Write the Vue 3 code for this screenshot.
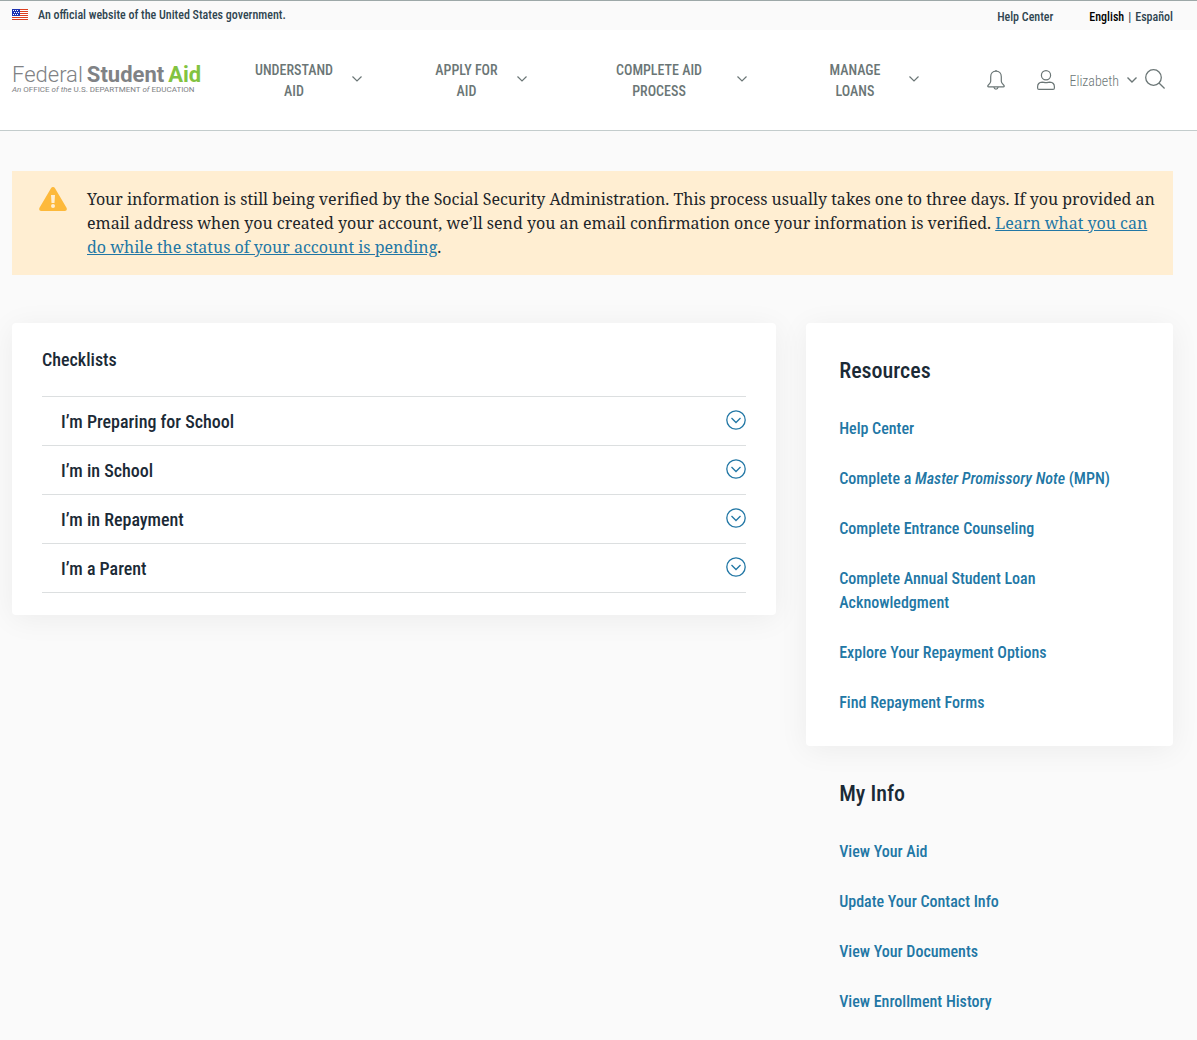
<script setup>
import { ref } from 'vue'

const navItems = [
  { id: 'understand', lines: ['UNDERSTAND', 'AID'] },
  { id: 'apply', lines: ['APPLY FOR', 'AID'] },
  { id: 'complete', lines: ['COMPLETE AID', 'PROCESS'] },
  { id: 'manage', lines: ['MANAGE', 'LOANS'] },
]

const checklists = ['I’m Preparing for School', 'I’m in School', 'I’m in Repayment', 'I’m a Parent']
const open = ref(null)

const infoLinks = ['View Your Aid', 'Update Your Contact Info', 'View Your Documents', 'View Enrollment History']
</script>

<template>
  <div class="page">
    <div class="gov-bar">
      <div class="official">
        <svg class="flag" width="16" height="11" viewBox="0 0 16 11" aria-hidden="true">
          <rect width="16" height="11" fill="#fff" />
          <path d="M0 .5h16M0 2.5h16M0 4.5h16M0 6.5h16M0 8.5h16M0 10.5h16" stroke="#db3e1f" />
          <rect width="8" height="7" fill="#1e33b1" />
          <path d="M1 1.5h6M2 3.5h6M1 5.5h6" stroke="#fff" stroke-dasharray="1 1" />
        </svg>
        <span>An official website of the United States government.</span>
      </div>
      <div class="utility">
        <a href="#help">Help Center</a>
        <div class="languages">
          <a href="#en" class="current">English</a>
          <span>|</span>
          <a href="#es">Español</a>
        </div>
      </div>
    </div>

    <header class="header">
      <a href="#home" class="logo">
        <span class="logo-name"><span class="light">Federal</span><b>Student</b><b class="green">Aid</b></span>
        <span class="logo-sub"><i>An</i> OFFICE <i>of the</i> U.S. DEPARTMENT <i>of</i> EDUCATION</span>
      </a>
      <nav class="nav">
        <button v-for="item in navItems" :key="item.id" type="button" :class="['nav-item', item.id]">
          <span class="nav-label">{{ item.lines[0] }}<br />{{ item.lines[1] }}</span>
          <svg width="10" height="6" viewBox="0 0 10 6" aria-hidden="true">
            <path d="M.5.5 5 5 9.5.5" fill="none" stroke="#6b7676" stroke-width="1.2" />
          </svg>
        </button>
      </nav>
      <div class="account">
        <button type="button" class="icon-button" aria-label="Notifications">
          <svg width="18" height="20" viewBox="0 0 18 20" fill="none" stroke="#6b7676" stroke-width="1.2" stroke-linejoin="round" aria-hidden="true">
            <path d="M9 1.2C5.8 1.2 3.700 3.500 3.700 6.700v4.500c0 1.800-1.200 2.800-2.500 4-.8.8-.5 1.600.5 1.600h14.600c1 0 1.300-.8.5-1.600-1.300-1.200-2.500-2.200-2.500-4V6.700C14.300 3.500 12.200 1.200 9 1.200Z" />
            <path d="M9 0v1.200M6.900 17c.2 1.500 1 2.200 2.100 2.200s1.900-.7 2.100-2.200" />
          </svg>
        </button>
        <button type="button" class="user">
          <svg class="user-icon" width="18" height="20" viewBox="0 0 18 20" fill="none" stroke="#6b7676" stroke-width="1.2" aria-hidden="true">
            <circle cx="9" cy="5.200" r="4.600" />
            <path d="M5.200 12.100C2.500 12.300.6 14 .6 16.800v1.100c0 .9.5 1.500 1.400 1.500h14c.9 0 1.400-.6 1.400-1.500v-1.100c0-2.800-1.900-4.500-4.600-4.700-1.300 0-2.200.6-3.800.6s-2.500-.6-3.800-.6Z" />
          </svg>
          <span class="user-name">Elizabeth</span>
          <svg width="10" height="6" viewBox="0 0 10 6" aria-hidden="true">
            <path d="M.5.5 5 5 9.5.5" fill="none" stroke="#6b7676" stroke-width="1.400" />
          </svg>
        </button>
        <button type="button" class="search" aria-label="Search">
          <svg width="20" height="20" viewBox="0 0 20 20" fill="none" stroke="#6b7676" stroke-width="1.300" aria-hidden="true">
            <circle cx="8.500" cy="8.500" r="7.800" />
            <path d="m14 14 5.600 5.500" />
          </svg>
        </button>
      </div>
    </header>

    <main class="main">
      <div class="alert" role="alert">
        <svg width="28" height="24" viewBox="0 0 28 24" aria-hidden="true">
          <path d="M12 1.200a2.300 2.300 0 0 1 4 0l11.500 19.500c.8 1.500.1 3.300-1.700 3.300H2.200c-1.800 0-2.500-1.800-1.700-3.300Z" fill="#fdb93b" />
          <path d="M12 8h4l-.5 8h-3Z" fill="#ffeed2" />
          <circle cx="14" cy="19" r="2" fill="#ffeed2" />
        </svg>
        <p>
          Your information is still being verified by the Social Security Administration. This process usually takes
          one to three days. If you provided an email address when you created your account, we’ll send you an email
          confirmation once your information is verified.
          <a href="#pending">Learn what you can do while the status of your account is pending</a>.
        </p>
      </div>

      <div class="columns">
        <section class="card checklists">
          <h2>Checklists</h2>
          <ul>
            <li v-for="(title, i) in checklists" :key="title">
              <button type="button" :aria-expanded="open === i" @click="open = open === i ? null : i">
                <span>{{ title }}</span>
                <svg width="20" height="20" viewBox="0 0 20 20" fill="none" stroke="#2277a5" stroke-width="1.300" aria-hidden="true">
                  <circle cx="10" cy="10" r="9.200" />
                  <path d="m5.500 8 4.500 4.500L14.500 8" />
                </svg>
              </button>
            </li>
          </ul>
        </section>

        <aside class="side">
          <section class="card panel">
            <h2>Resources</h2>
            <ul>
              <li><a href="#help-center">Help Center</a></li>
              <li><a href="#mpn">Complete a <em>Master Promissory Note</em> (MPN)</a></li>
              <li><a href="#entrance">Complete Entrance Counseling</a></li>
              <li><a href="#annual">Complete Annual Student Loan<br />Acknowledgment</a></li>
              <li><a href="#repayment">Explore Your Repayment Options</a></li>
              <li><a href="#forms">Find Repayment Forms</a></li>
            </ul>
          </section>
          <section class="panel">
            <h2>My Info</h2>
            <ul>
              <li v-for="link in infoLinks" :key="link"><a href="#info">{{ link }}</a></li>
            </ul>
          </section>
        </aside>
      </div>
    </main>
  </div>
</template>

<style>
body {
  background: #fafafa;
}
</style>

<style scoped>
.page {
  font-family: "Roboto Condensed", "Open Sans Condensed", "Liberation Sans Narrow", sans-serif;
  color: #1b2a36;
}

a {
  color: inherit;
  text-decoration: none;
}

button {
  padding: 0;
  border: 0;
  background: none;
  font: inherit;
  color: inherit;
  cursor: pointer;
}

svg {
  display: block;
  flex: none;
}

ul {
  margin: 0;
  padding: 0;
  list-style: none;
}

.gov-bar {
  display: flex;
  justify-content: space-between;
  align-items: center;
  box-sizing: border-box;
  min-height: 30px;
  padding: 0 24px 0 12px;
  border-top: 1px solid #9da8a8;
  font-size: 12px;
  font-weight: 500;
  line-height: 15px;
  color: #2f4550;
}

.official {
  display: flex;
  align-items: center;
  gap: 10px;
}

.flag {
  margin-bottom: 2px;
}

.utility,
.languages {
  display: flex;
}

.utility {
  gap: 36px;
  padding-top: 4px;
}

.languages {
  gap: 4px;
}

.current {
  color: #000;
}

.header {
  display: flex;
  align-items: center;
  min-height: 100px;
  padding: 0 32px 0 12px;
  border-bottom: 1px solid #c3cccc;
  background: #fff;
  color: #6b7676;
}

.logo {
  display: flex;
  flex-direction: column;
  flex: none;
  width: 192px;
  padding-bottom: 2px;
  font-family: Roboto, sans-serif;
  color: #808285;
}

.logo-name {
  display: flex;
  gap: 4px;
  font-size: 22px;
  line-height: 22px;
}

.light {
  font-weight: 300;
}

.green {
  color: #82c341;
}

.logo-sub {
  font-size: 8px;
  line-height: 8px;
  white-space: nowrap;
}

.nav {
  display: flex;
  gap: 72px;
  margin-left: 50px;
}

.nav-item {
  display: flex;
  align-items: center;
  gap: 18px;
  font-size: 14px;
  font-weight: 500;
  line-height: 21px;
}

.nav-item svg {
  margin-bottom: 2px;
}

.nav-label {
  padding-top: 2px;
}

.understand .nav-label {
  min-width: 80px;
}

.apply .nav-label {
  min-width: 65px;
}

.complete .nav-label {
  min-width: 120px;
}

.manage .nav-label {
  min-width: 72px;
}

.account {
  display: flex;
  align-items: center;
  gap: 8px;
  margin-left: auto;
}

.user {
  display: flex;
  align-items: center;
  gap: 8px;
  margin-left: 24px;
  font-size: 14px;
  font-weight: 300;
}

.user-icon {
  margin-right: 6px;
}

.user-name {
  padding-top: 2px;
}

.search {
  padding-bottom: 3px;
}

.main {
  padding: 40px 24px 24px 12px;
}

.alert {
  display: flex;
  gap: 20px;
  padding: 16px 16px 16px 27px;
  background: #ffeed2;
}

.alert p {
  margin: 0;
  font-family: "Noto Serif", "Droid Serif", "DejaVu Serif Condensed", serif;
  font-size: 16px;
  line-height: 24px;
  color: #212529;
}

.alert a {
  color: #2277a5;
  text-decoration: underline;
}

.columns {
  display: grid;
  grid-template-columns: 25fr 12fr;
  gap: 30px;
  align-items: start;
  margin-top: 48px;
}

.card {
  border-radius: 4px;
  background: #fff;
  box-shadow: 0 4px 30px rgba(0, 0, 0, 0.06);
}

.checklists {
  padding: 24px 30px 22px;
}

.checklists h2 {
  margin: 0 0 24px;
  font-size: 18px;
  font-weight: 500;
  line-height: 25px;
}

.checklists ul {
  border-top: 1px solid #dcdfe0;
}

.checklists li {
  border-bottom: 1px solid #dcdfe0;
}

.checklists button {
  display: flex;
  justify-content: space-between;
  align-items: center;
  width: 100%;
  height: 48px;
  padding-left: 19px;
  font-size: 18px;
  font-weight: 500;
}

.checklists svg {
  margin-bottom: 2px;
}

.panel {
  padding: 33px 33px 31px;
}

.panel h2 {
  margin: 0 0 31px;
  font-size: 22px;
  font-weight: 500;
  line-height: 30px;
}

.panel ul {
  display: grid;
  gap: 26px;
  font-size: 16px;
  font-weight: 500;
  line-height: 24px;
  color: #2277a5;
}
</style>
